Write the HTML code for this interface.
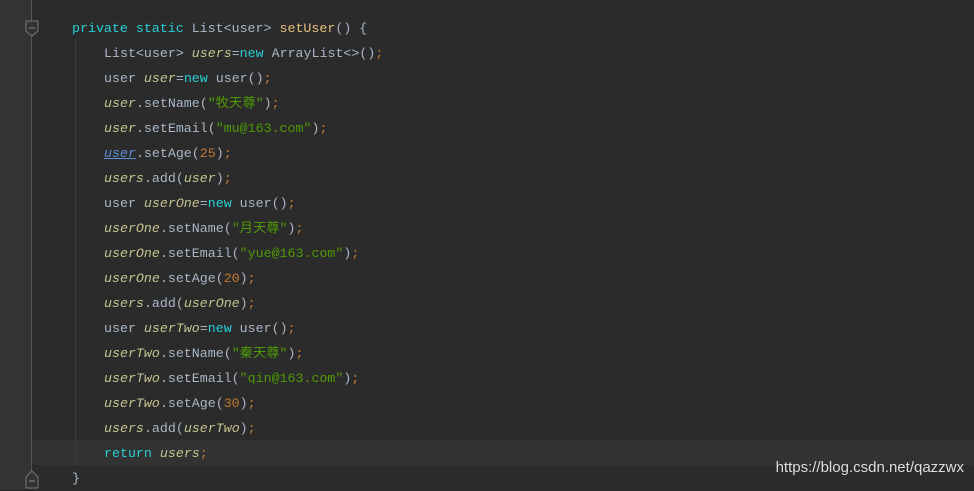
<!DOCTYPE html><html><head><style>
body{margin:0;width:974px;height:489px;background:#2b2b2b;overflow:hidden;position:relative;font-family:"Liberation Mono","Noto Sans CJK SC",monospace;font-size:13.3px;color:#a9b7c6}
.g{position:absolute;left:0;top:0;width:31px;height:489px;background:#313335}
.gl{position:absolute;left:31px;top:0;width:1px;height:489px;background:#555}
.ig{position:absolute;left:75px;top:40px;width:1px;height:425px;background:#3b3b3b}
.hl{position:absolute;left:32px;top:440px;width:942px;height:25px;background:#323232}
.l{position:absolute;left:104px;height:25px;line-height:25px;white-space:pre}
.k{color:#26d0d6}.v{color:#c3c38f;font-style:italic}.s{color:#4e9a06}.n{color:#c07a33}.f{color:#e6c07b}.p{color:#c07a33}
.u{color:#5a8fd6;font-style:italic;text-decoration:underline}
.w{position:absolute;right:10px;top:459px;font-family:"Liberation Sans",sans-serif;font-size:15px;color:#ddd}
</style></head><body>
<div class="g"></div><div class="gl"></div><div class="hl"></div><div class="ig"></div>
<svg style="position:absolute;left:24px;top:20px" width="16" height="18"><path d="M2 1h12v10l-6 5l-6-5z" fill="#313335" stroke="#777"/><path d="M5 8h6" stroke="#888"/></svg>
<svg style="position:absolute;left:24px;top:468px" width="16" height="21"><path d="M2 20V9l6-6l6 6v11z" fill="#313335" stroke="#777"/><path d="M5 13h6" stroke="#888"/></svg>
<div class="l" style="left:72px;top:16px"><span class="k">private static</span> List&lt;user&gt; <span class="f">setUser</span>() {</div>
<div class="l" style="top:41px">List&lt;user&gt; <span class="v">users</span>=<span class="k">new</span> ArrayList&lt;&gt;()<span class="p">;</span></div>
<div class="l" style="top:66px">user <span class="v">user</span>=<span class="k">new</span> user()<span class="p">;</span></div>
<div class="l" style="top:91px"><span class="v">user</span>.setName(<span class="s">"牧天尊"</span>)<span class="p">;</span></div>
<div class="l" style="top:116px"><span class="v">user</span>.setEmail(<span class="s">"mu@163.com"</span>)<span class="p">;</span></div>
<div class="l" style="top:141px"><span class="u">user</span>.setAge(<span class="n">25</span>)<span class="p">;</span></div>
<div class="l" style="top:166px"><span class="v">users</span>.add(<span class="v">user</span>)<span class="p">;</span></div>
<div class="l" style="top:191px">user <span class="v">userOne</span>=<span class="k">new</span> user()<span class="p">;</span></div>
<div class="l" style="top:216px"><span class="v">userOne</span>.setName(<span class="s">"月天尊"</span>)<span class="p">;</span></div>
<div class="l" style="top:241px"><span class="v">userOne</span>.setEmail(<span class="s">"yue@163.com"</span>)<span class="p">;</span></div>
<div class="l" style="top:266px"><span class="v">userOne</span>.setAge(<span class="n">20</span>)<span class="p">;</span></div>
<div class="l" style="top:291px"><span class="v">users</span>.add(<span class="v">userOne</span>)<span class="p">;</span></div>
<div class="l" style="top:316px">user <span class="v">userTwo</span>=<span class="k">new</span> user()<span class="p">;</span></div>
<div class="l" style="top:341px"><span class="v">userTwo</span>.setName(<span class="s">"秦天尊"</span>)<span class="p">;</span></div>
<div class="l" style="top:366px"><span class="v">userTwo</span>.setEmail(<span class="s">"qin@163.com"</span>)<span class="p">;</span></div>
<div class="l" style="top:391px"><span class="v">userTwo</span>.setAge(<span class="n">30</span>)<span class="p">;</span></div>
<div class="l" style="top:416px"><span class="v">users</span>.add(<span class="v">userTwo</span>)<span class="p">;</span></div>
<div class="l" style="top:441px"><span class="k">return</span> <span class="v">users</span><span class="p">;</span></div>
<div class="l" style="left:72px;top:466px">}</div>
<div class="w">https://blog.csdn.net/qazzwx</div>
</body></html>
